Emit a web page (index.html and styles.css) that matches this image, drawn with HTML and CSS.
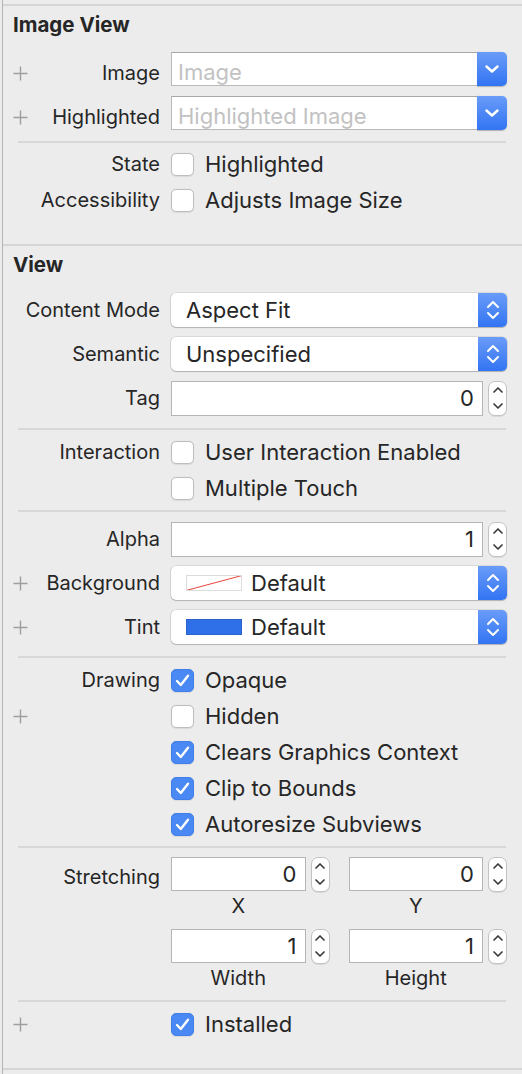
FILE: index.html
```html
<!DOCTYPE html>
<html>
<head>
<meta charset="utf-8">
<link rel="stylesheet" href="styles.css">
</head>
<body>
<div class="panel">
  <div class="fullline"></div>

  <div class="title">Image View</div>
  <div class="row low">
    <div class="lab"><span class="plus"><svg width="15" height="15" viewBox="0 0 15 15"><path d="M7.5 0.5v14M0.5 7.5h14" stroke="#9e9e9e" stroke-width="1.4" fill="none"/></svg></span><span>Image</span></div>
    <div class="combo"><div class="combo-field placeholder">Image</div><div class="combo-btn"><svg width="14" height="8" viewBox="0 0 14 8"><path d="M1.5 1.5l5.5 5 5.5-5" stroke="#fff" stroke-width="2.4" fill="none" stroke-linecap="round" stroke-linejoin="round"/></svg></div></div>
  </div>
  <div class="row low">
    <div class="lab"><span class="plus"><svg width="15" height="15" viewBox="0 0 15 15"><path d="M7.5 0.5v14M0.5 7.5h14" stroke="#9e9e9e" stroke-width="1.4" fill="none"/></svg></span><span>Highlighted</span></div>
    <div class="combo"><div class="combo-field placeholder">Highlighted Image</div><div class="combo-btn"><svg width="14" height="8" viewBox="0 0 14 8"><path d="M1.5 1.5l5.5 5 5.5-5" stroke="#fff" stroke-width="2.4" fill="none" stroke-linecap="round" stroke-linejoin="round"/></svg></div></div>
  </div>
  <div class="sep sep-a"></div>
  <div class="crow">
    <div class="lab"><span>State</span></div>
    <div class="check"><span class="box"></span><span>Highlighted</span></div>
  </div>
  <div class="crow">
    <div class="lab"><span>Accessibility</span></div>
    <div class="check"><span class="box"></span><span>Adjusts Image Size</span></div>
  </div>
  <div class="fullline mid"></div>

  <div class="title">View</div>
  <div class="row">
    <div class="lab"><span>Content Mode</span></div>
    <div class="popup"><div class="popup-field">Aspect Fit</div><div class="popup-btn"><svg width="14" height="22" viewBox="0 0 14 22"><path d="M2 8l5-5 5 5M2 14l5 5 5-5" stroke="#fff" stroke-width="2" fill="none" stroke-linecap="round" stroke-linejoin="round"/></svg></div></div>
  </div>
  <div class="row">
    <div class="lab"><span>Semantic</span></div>
    <div class="popup"><div class="popup-field">Unspecified</div><div class="popup-btn"><svg width="14" height="22" viewBox="0 0 14 22"><path d="M2 8l5-5 5 5M2 14l5 5 5-5" stroke="#fff" stroke-width="2" fill="none" stroke-linecap="round" stroke-linejoin="round"/></svg></div></div>
  </div>
  <div class="row">
    <div class="lab"><span>Tag</span></div>
    <div class="numfield"><div class="tf">0</div><div class="stepper"><svg width="12" height="28" viewBox="0 0 12 28"><path d="M2 8l4-4 4 4M2 20l4 4 4-4" stroke="#3a3a3a" stroke-width="1.7" fill="none" stroke-linecap="round" stroke-linejoin="round"/></svg></div></div>
  </div>
  <div class="sep sep-b"></div>
  <div class="crow">
    <div class="lab"><span>Interaction</span></div>
    <div class="check"><span class="box"></span><span>User Interaction Enabled</span></div>
  </div>
  <div class="crow">
    <div class="lab"></div>
    <div class="check"><span class="box"></span><span>Multiple Touch</span></div>
  </div>
  <div class="sep sep-c"></div>
  <div class="row">
    <div class="lab"><span>Alpha</span></div>
    <div class="numfield"><div class="tf">1</div><div class="stepper"><svg width="12" height="28" viewBox="0 0 12 28"><path d="M2 8l4-4 4 4M2 20l4 4 4-4" stroke="#3a3a3a" stroke-width="1.7" fill="none" stroke-linecap="round" stroke-linejoin="round"/></svg></div></div>
  </div>
  <div class="row">
    <div class="lab"><span class="plus"><svg width="15" height="15" viewBox="0 0 15 15"><path d="M7.5 0.5v14M0.5 7.5h14" stroke="#9e9e9e" stroke-width="1.4" fill="none"/></svg></span><span>Background</span></div>
    <div class="popup"><div class="popup-field"><span class="swatch swatch-clear"><svg width="56" height="16" viewBox="0 0 56 16" preserveAspectRatio="none"><path d="M0 15.5L56 0.5" stroke="#e8453c" stroke-width="1"/></svg></span>Default</div><div class="popup-btn"><svg width="14" height="22" viewBox="0 0 14 22"><path d="M2 8l5-5 5 5M2 14l5 5 5-5" stroke="#fff" stroke-width="2" fill="none" stroke-linecap="round" stroke-linejoin="round"/></svg></div></div>
  </div>
  <div class="row">
    <div class="lab"><span class="plus"><svg width="15" height="15" viewBox="0 0 15 15"><path d="M7.5 0.5v14M0.5 7.5h14" stroke="#9e9e9e" stroke-width="1.4" fill="none"/></svg></span><span>Tint</span></div>
    <div class="popup"><div class="popup-field"><span class="swatch swatch-blue"></span>Default</div><div class="popup-btn"><svg width="14" height="22" viewBox="0 0 14 22"><path d="M2 8l5-5 5 5M2 14l5 5 5-5" stroke="#fff" stroke-width="2" fill="none" stroke-linecap="round" stroke-linejoin="round"/></svg></div></div>
  </div>
  <div class="sep sep-d"></div>
  <div class="crow">
    <div class="lab"><span>Drawing</span></div>
    <div class="check"><span class="box on"><svg width="15" height="13" viewBox="0 0 15 13"><path d="M2 7l3.8 4L13 1.8" stroke="#fff" stroke-width="2.4" fill="none" stroke-linecap="round" stroke-linejoin="round"/></svg></span><span>Opaque</span></div>
  </div>
  <div class="crow">
    <div class="lab"><span class="plus"><svg width="15" height="15" viewBox="0 0 15 15"><path d="M7.5 0.5v14M0.5 7.5h14" stroke="#9e9e9e" stroke-width="1.4" fill="none"/></svg></span></div>
    <div class="check"><span class="box"></span><span>Hidden</span></div>
  </div>
  <div class="crow">
    <div class="lab"></div>
    <div class="check"><span class="box on"><svg width="15" height="13" viewBox="0 0 15 13"><path d="M2 7l3.8 4L13 1.8" stroke="#fff" stroke-width="2.4" fill="none" stroke-linecap="round" stroke-linejoin="round"/></svg></span><span>Clears Graphics Context</span></div>
  </div>
  <div class="crow">
    <div class="lab"></div>
    <div class="check"><span class="box on"><svg width="15" height="13" viewBox="0 0 15 13"><path d="M2 7l3.8 4L13 1.8" stroke="#fff" stroke-width="2.4" fill="none" stroke-linecap="round" stroke-linejoin="round"/></svg></span><span>Clip to Bounds</span></div>
  </div>
  <div class="crow">
    <div class="lab"></div>
    <div class="check"><span class="box on"><svg width="15" height="13" viewBox="0 0 15 13"><path d="M2 7l3.8 4L13 1.8" stroke="#fff" stroke-width="2.4" fill="none" stroke-linecap="round" stroke-linejoin="round"/></svg></span><span>Autoresize Subviews</span></div>
  </div>
  <div class="sep sep-e"></div>
  <div class="stretch">
    <div class="lab stretch-lab"><span>Stretching</span></div>
    <div class="sgrid">
      <div class="sgroup">
        <div class="numfield"><div class="tf">0</div><div class="stepper"><svg width="12" height="28" viewBox="0 0 12 28"><path d="M2 8l4-4 4 4M2 20l4 4 4-4" stroke="#3a3a3a" stroke-width="1.7" fill="none" stroke-linecap="round" stroke-linejoin="round"/></svg></div></div>
        <div class="cap">X</div>
      </div>
      <div class="sgroup">
        <div class="numfield"><div class="tf">0</div><div class="stepper"><svg width="12" height="28" viewBox="0 0 12 28"><path d="M2 8l4-4 4 4M2 20l4 4 4-4" stroke="#3a3a3a" stroke-width="1.7" fill="none" stroke-linecap="round" stroke-linejoin="round"/></svg></div></div>
        <div class="cap">Y</div>
      </div>
      <div class="sgroup">
        <div class="numfield"><div class="tf">1</div><div class="stepper"><svg width="12" height="28" viewBox="0 0 12 28"><path d="M2 8l4-4 4 4M2 20l4 4 4-4" stroke="#3a3a3a" stroke-width="1.7" fill="none" stroke-linecap="round" stroke-linejoin="round"/></svg></div></div>
        <div class="cap">Width</div>
      </div>
      <div class="sgroup">
        <div class="numfield"><div class="tf">1</div><div class="stepper"><svg width="12" height="28" viewBox="0 0 12 28"><path d="M2 8l4-4 4 4M2 20l4 4 4-4" stroke="#3a3a3a" stroke-width="1.7" fill="none" stroke-linecap="round" stroke-linejoin="round"/></svg></div></div>
        <div class="cap">Height</div>
      </div>
    </div>
  </div>
  <div class="sep sep-f"></div>
  <div class="crow">
    <div class="lab"><span class="plus"><svg width="15" height="15" viewBox="0 0 15 15"><path d="M7.5 0.5v14M0.5 7.5h14" stroke="#9e9e9e" stroke-width="1.4" fill="none"/></svg></span></div>
    <div class="check"><span class="box on"><svg width="15" height="13" viewBox="0 0 15 13"><path d="M2 7l3.8 4L13 1.8" stroke="#fff" stroke-width="2.4" fill="none" stroke-linecap="round" stroke-linejoin="round"/></svg></span><span>Installed</span></div>
  </div>
  <div class="fullline bottom"></div>
</div>
</body>
</html>
```

FILE: styles.css
```css
html, body {
  margin: 0;
  padding: 0;
  background: #ececec;
}
body {
  font-family: Inter, "Liberation Sans", sans-serif;
  font-size: 20px;
  color: #262626;
  width: 522px;
  height: 1074px;
  overflow: hidden;
}
.panel {
  margin-left: 2px;
  border-left: 1px solid #b5b5b5;
  padding-top: 4px;
  height: 1070px;
}
.fullline {
  height: 2px;
  background: #d5d5d5;
}
.fullline.mid { margin-top: 26px; }
.fullline.bottom { margin-top: 26px; }
.title {
  font-weight: 700;
  line-height: 24px;
  padding: 7px 0 10px 10px;
  font-size: 20.5px;
}
.fullline.mid + .title { padding-bottom: 11px; }
.row, .crow, .stretch {
  display: grid;
  grid-template-columns: 157px 1fr;
  column-gap: 11px;
  padding-right: 15px;
  align-items: center;
}
.row { height: 44px; }
.crow { height: 36px; }
.lab {
  display: flex;
  align-items: center;
  padding-left: 10px;
  line-height: 24px;
  white-space: nowrap;
}
.row.low .lab { padding-top: 8px; }
.lab > span:last-child { margin-left: auto; }
.lab > span.plus:last-child { margin-left: 0; }
.plus { display: flex; width: 15px; height: 15px; }
.sep {
  height: 2px;
  background: #d8d8d8;
  margin: 0 16px 0 15px;
}
.sep-a { margin-top: 6px; margin-bottom: 3px; }
.sep-b { margin-top: 8px; margin-bottom: 4px; }
.sep-c { margin-top: 4px; margin-bottom: 5px; }
.sep-d { margin-top: 7px; margin-bottom: 4px; }
.sep-e { margin-top: 4px; margin-bottom: 9px; }
.sep-f { margin-top: 11px; margin-bottom: 4px; }

/* control text */
.combo-field, .popup-field, .tf, .check {
  font-size: 22px;
}

/* combo box */
.combo {
  display: flex;
  height: 34px;
}
.combo-field {
  flex: 1;
  box-sizing: border-box;
  background: #fff;
  border: 1px solid #b9b9b9;
  border-top-color: #a8a8a8;
  border-right: none;
  padding: 6px 0 0 6px;
  line-height: 26px;
  white-space: nowrap;
  overflow: hidden;
}
.placeholder { color: #c2c2c2; }
.combo-btn {
  width: 30px;
  border-radius: 0 5px 5px 0;
  background: linear-gradient(#6a9cf8, #3274f3);
  display: flex;
  align-items: center;
  justify-content: center;
  box-shadow: 0 0.5px 1px rgba(0,0,0,0.25);
}

/* popup button */
.popup {
  display: flex;
  height: 34px;
  border-radius: 5px;
  background: #fff;
  box-shadow: 0 0 0 0.6px rgba(0,0,0,0.16), 0 1px 1px rgba(0,0,0,0.18);
}
.popup-field {
  flex: 1;
  display: flex;
  align-items: center;
  padding-left: 15px;
  white-space: nowrap;
}
.popup-btn {
  width: 29px;
  border-radius: 0 5px 5px 0;
  background: linear-gradient(#6a9cf8, #3274f3);
  display: flex;
  align-items: center;
  justify-content: center;
}
.swatch {
  display: block;
  width: 56px;
  height: 16px;
  margin-right: 9px;
  box-sizing: border-box;
}
.swatch svg { display: block; }
.swatch-clear {
  border: 1px solid #dcdcdc;
  background: #fff;
  overflow: hidden;
}
.swatch-clear svg { margin: -1px; width: 56px; height: 16px; }
.swatch-blue {
  background: #2f70e8;
  border: 1px solid #2a63cc;
}

/* number field + stepper */
.numfield {
  display: flex;
  align-items: center;
  gap: 5px;
  height: 35px;
}
.tf {
  flex: 1;
  height: 100%;
  box-sizing: border-box;
  background: #fff;
  border: 1px solid #b5b5b5;
  text-align: right;
  padding-right: 8px;
  line-height: 33px;
}
.stepper {
  width: 19px;
  height: 35px;
  box-sizing: border-box;
  border: 1px solid #c3c3c3;
  border-radius: 7px;
  background: #fff;
  display: flex;
  align-items: center;
  justify-content: center;
  box-shadow: 0 1px 0.5px rgba(0,0,0,0.08);
}

/* checkbox */
.check {
  display: flex;
  align-items: center;
  gap: 11px;
  white-space: nowrap;
}
.box {
  width: 23px;
  height: 23px;
  box-sizing: border-box;
  border-radius: 5px;
  background: #fff;
  border: 1px solid #bdbdbd;
  box-shadow: 0 0.5px 1px rgba(0,0,0,0.08);
  display: flex;
  align-items: center;
  justify-content: center;
}
.box.on {
  background: #4a89f3;
  border-color: #3f7fe9;
}

/* stretching */
.stretch { align-items: start; }
.stretch-lab { height: 40px; }
.sgrid {
  display: grid;
  grid-template-columns: 1fr 1fr;
  column-gap: 19px;
  row-gap: 12px;
}
.sgroup .numfield { height: 34px; }
.sgroup .stepper { height: 35px; }
.cap {
  margin-top: 4px;
  line-height: 22px;
  text-align: center;
  padding-right: 24px;
}
```
